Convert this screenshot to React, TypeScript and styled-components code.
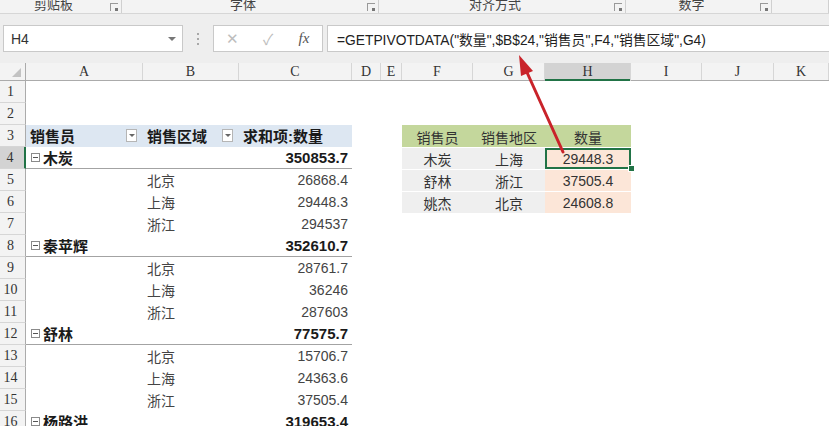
import styled, { createGlobalStyle } from "styled-components"

const GlobalStyle = createGlobalStyle`
  html, body {
    margin: 0;
    padding: 0;
    background: #ffffff;
    overflow: hidden;
  }
  body {
    font-family: "Liberation Sans", "Noto Sans CJK SC", sans-serif;
    color: #333;
  }
`;

const UI = `"Liberation Sans", "Noto Sans CJK SC", sans-serif`;
const HEAD_FONT = `"Liberation Serif", "Noto Sans CJK SC", serif`;
const GRID = "26px 117px 96px 113px 29px 21px 71px 72px 86px 71px 72px 1fr";

const Page = styled.div`
  position: relative;
  width: 829px;
  height: 426px;
  overflow: hidden;
  background: #ffffff;
`;

/* ribbon group captions */
const RibbonBar = styled.div`
  display: flex;
  height: 13px;
  background: #f3f3f3;
  border-bottom: 1px solid #d6d6d6;
  overflow: hidden;
`;

const RibbonGroup = styled.div<{ $w: number }>`
  display: flex;
  align-items: flex-start;
  width: ${(p) => p.$w}px;
  flex: ${(p) => (p.$w ? "none" : "1")};
  border-right: 1px solid #d0d0d0;
  box-sizing: border-box;
`;

const GroupLabel = styled.div`
  flex: 1;
  text-align: center;
  font-family: ${UI};
  font-size: 13px;
  line-height: 13px;
  margin-top: -2px;
  color: #444;
`;

const Launcher = styled.div`
  width: 7px;
  height: 7px;
  margin: 3px 3px 0 3px;
  border-left: 1px solid #999;
  border-top: 1px solid #999;
  position: relative;
  &::after {
    content: "";
    position: absolute;
    right: 0;
    bottom: 0;
    width: 3px;
    height: 3px;
    background: #777;
  }
`;

/* formula bar */
const FormulaBand = styled.div`
  display: flex;
  align-items: center;
  height: 49px;
  padding: 0 0 0 3px;
  background: #eeeeee;
`;

const NameBox = styled.div`
  display: flex;
  align-items: center;
  justify-content: space-between;
  width: 180px;
  height: 27px;
  box-sizing: border-box;
  background: #fff;
  border: 1px solid #c9c9c9;
  padding: 0 6px 0 7px;
  font-family: ${UI};
  font-size: 14px;
  color: #333;
`;

const Caret = styled.span`
  width: 0;
  height: 0;
  border-left: 4px solid transparent;
  border-right: 4px solid transparent;
  border-top: 4px solid #777;
`;

const Grip = styled.div`
  width: 30px;
  display: flex;
  flex-direction: column;
  align-items: center;
  gap: 3px;
  span {
    width: 2px;
    height: 2px;
    background: #a8a8a8;
  }
`;

const FxButtons = styled.div`
  display: flex;
  align-items: center;
  width: 110px;
  height: 27px;
  box-sizing: border-box;
  background: #fff;
  border: 1px solid #c9c9c9;
`;

const FxBtn = styled.span<{ $dim?: boolean }>`
  flex: 1;
  text-align: center;
  font-size: 15px;
  color: ${(p) => (p.$dim ? "#bdbdbd" : "#555")};
  font-family: ${(p) => (p.$dim ? UI : `"Liberation Serif", serif`)};
  font-style: ${(p) => (p.$dim ? "normal" : "italic")};
`;

const FormulaInput = styled.div`
  flex: 1;
  height: 27px;
  margin-left: 4px;
  box-sizing: border-box;
  background: #fff;
  border: 1px solid #c9c9c9;
  border-right: none;
  display: flex;
  align-items: center;
  padding-left: 9px;
  font-family: ${UI};
  font-size: 13.8px;
  color: #222;
  white-space: nowrap;
`;

/* sheet */
const SheetRow = styled.div<{ $h: number }>`
  display: grid;
  grid-template-columns: ${GRID};
  height: ${(p) => p.$h}px;
`;

const ColHeadRow = styled(SheetRow)`
  background: #f3f3f3;
  border-bottom: 1px solid #ababab;
`;

const Corner = styled.div`
  position: relative;
  border-right: 1px solid #ababab;
  &::after {
    content: "";
    position: absolute;
    right: 4px;
    bottom: 3px;
    width: 0;
    height: 0;
    border-left: 9px solid transparent;
    border-bottom: 9px solid #c2c2c2;
  }
`;

const ColHead = styled.div<{ $active?: boolean }>`
  display: flex;
  align-items: center;
  justify-content: center;
  font-family: ${HEAD_FONT};
  font-size: 14px;
  color: #333;
  border-right: 1px solid #d6d6d6;
  box-sizing: border-box;
  background: ${(p) => (p.$active ? "#d3d3d3" : "transparent")};
  box-shadow: ${(p) => (p.$active ? "inset 0 -2px 0 #217346" : "none")};
  margin-bottom: ${(p) => (p.$active ? "-1px" : "0")};
`;

const RowHead = styled.div<{ $active?: boolean }>`
  display: flex;
  align-items: center;
  justify-content: center;
  padding-right: 4px;
  font-family: ${HEAD_FONT};
  font-size: 14px;
  color: #333;
  background: ${(p) => (p.$active ? "#d3d3d3" : "#f3f3f3")};
  border-bottom: 1px solid #d6d6d6;
  border-right: ${(p) => (p.$active ? "2px solid #217346" : "1px solid #ababab")};
  box-sizing: border-box;
`;

type Tone = "none" | "head" | "group" | "item";

const PivotCell = styled.div<{ $tone: Tone; $right?: boolean }>`
  display: flex;
  align-items: center;
  justify-content: ${(p) => (p.$right ? "flex-end" : "space-between")};
  gap: 2px;
  padding: 0 ${(p) => (p.$right ? "4px" : "6px")} 0 4px;
  box-sizing: border-box;
  white-space: nowrap;
  font-family: ${UI};
  font-size: ${(p) => (p.$tone === "item" ? "14px" : "15px")};
  font-weight: ${(p) => (p.$tone === "head" || p.$tone === "group" ? 700 : 400)};
  color: ${(p) => (p.$tone === "item" ? "#444" : "#1a1a1a")};
  background: ${(p) => (p.$tone === "head" ? "#dde7f2" : "transparent")};
  border-bottom: 1px solid ${(p) => (p.$tone === "group" ? "#a3a3a3" : "transparent")};
`;

const FilterBtn = styled.span`
  flex: none;
  width: 11px;
  height: 13px;
  box-sizing: border-box;
  background: #fff;
  border: 1px solid #b5b5b5;
  display: flex;
  align-items: center;
  justify-content: center;
  &::after {
    content: "";
    border-left: 3px solid transparent;
    border-right: 3px solid transparent;
    border-top: 3px solid #666;
  }
`;

const Collapse = styled.span`
  display: inline-flex;
  align-items: center;
  justify-content: center;
  width: 9px;
  height: 9px;
  box-sizing: border-box;
  border: 1px solid #8a8a8a;
  margin: 0 3px 0 1px;
  &::after {
    content: "";
    width: 5px;
    height: 1px;
    background: #555;
  }
`;

const GroupName = styled.span`
  display: flex;
  align-items: center;
`;

const Blank = styled.div``;

type RtTone = "head" | "name" | "val";

const RtCell = styled.div<{ $tone: RtTone; $selected?: boolean }>`
  position: relative;
  display: flex;
  align-items: center;
  justify-content: center;
  font-family: ${UI};
  font-size: 14px;
  color: #333;
  background: ${(p) =>
    p.$tone === "head" ? "#c4d79c" : p.$tone === "val" ? "#fce6d8" : "#efefef"};
  border-top: 1px solid ${(p) => (p.$tone === "head" ? "transparent" : "#ffffff")};
  box-shadow: ${(p) => (p.$selected ? "inset 0 0 0 2px #217346" : "none")};
  &::after {
    content: "";
    display: ${(p) => (p.$selected ? "block" : "none")};
    position: absolute;
    right: -4px;
    bottom: -3px;
    width: 5px;
    height: 5px;
    background: #217346;
    border: 1px solid #fff;
    z-index: 2;
  }
`;

const ArrowLayer = styled.svg`
  position: absolute;
  left: 0;
  top: 0;
  pointer-events: none;
`;

type Pivot =
  | { kind: "head" }
  | { kind: "group"; name: string; total: string }
  | { kind: "item"; city: string; value: string };

type Right =
  | { kind: "head" }
  | { kind: "body"; name: string; city: string; qty: string; selected?: boolean };

const rows: { pivot?: Pivot; right?: Right }[] = [
  {},
  {},
  { pivot: { kind: "head" }, right: { kind: "head" } },
  {
    pivot: { kind: "group", name: "木炭", total: "350853.7" },
    right: { kind: "body", name: "木炭", city: "上海", qty: "29448.3", selected: true },
  },
  {
    pivot: { kind: "item", city: "北京", value: "26868.4" },
    right: { kind: "body", name: "舒林", city: "浙江", qty: "37505.4" },
  },
  {
    pivot: { kind: "item", city: "上海", value: "29448.3" },
    right: { kind: "body", name: "姚杰", city: "北京", qty: "24608.8" },
  },
  { pivot: { kind: "item", city: "浙江", value: "294537" } },
  { pivot: { kind: "group", name: "秦苹辉", total: "352610.7" } },
  { pivot: { kind: "item", city: "北京", value: "28761.7" } },
  { pivot: { kind: "item", city: "上海", value: "36246" } },
  { pivot: { kind: "item", city: "浙江", value: "287603" } },
  { pivot: { kind: "group", name: "舒林", total: "77575.7" } },
  { pivot: { kind: "item", city: "北京", value: "15706.7" } },
  { pivot: { kind: "item", city: "上海", value: "24363.6" } },
  { pivot: { kind: "item", city: "浙江", value: "37505.4" } },
  { pivot: { kind: "group", name: "杨路洪", total: "319653.4" } },
];

const columns = ["A", "B", "C", "D", "E", "F", "G", "H", "I", "J", "K"];

function PivotCells({ pivot }: { pivot?: Pivot }) {
  if (!pivot) {
    return (
      <>
        <Blank />
        <Blank />
        <Blank />
      </>
    );
  }
  if (pivot.kind === "head") {
    return (
      <>
        <PivotCell $tone="head">
          销售员
          <FilterBtn />
        </PivotCell>
        <PivotCell $tone="head">
          销售区域
          <FilterBtn />
        </PivotCell>
        <PivotCell $tone="head">求和项:数量</PivotCell>
      </>
    );
  }
  if (pivot.kind === "group") {
    return (
      <>
        <PivotCell $tone="group">
          <GroupName>
            <Collapse />
            {pivot.name}
          </GroupName>
        </PivotCell>
        <PivotCell $tone="group" />
        <PivotCell $tone="group" $right>
          {pivot.total}
        </PivotCell>
      </>
    );
  }
  return (
    <>
      <PivotCell $tone="item" />
      <PivotCell $tone="item">{pivot.city}</PivotCell>
      <PivotCell $tone="item" $right>
        {pivot.value}
      </PivotCell>
    </>
  );
}

function RightCells({ right }: { right?: Right }) {
  if (!right) {
    return (
      <>
        <Blank />
        <Blank />
        <Blank />
      </>
    );
  }
  if (right.kind === "head") {
    return (
      <>
        <RtCell $tone="head">销售员</RtCell>
        <RtCell $tone="head">销售地区</RtCell>
        <RtCell $tone="head">数量</RtCell>
      </>
    );
  }
  return (
    <>
      <RtCell $tone="name">{right.name}</RtCell>
      <RtCell $tone="name">{right.city}</RtCell>
      <RtCell $tone="val" $selected={right.selected}>
        {right.qty}
      </RtCell>
    </>
  );
}

const ribbonGroups = [
  { label: "剪贴板", w: 122 },
  { label: "字体", w: 257 },
  { label: "对齐方式", w: 247 },
  { label: "数字", w: 146 },
];

export default function App() {
  return (
    <Page>
      <GlobalStyle />
      <RibbonBar>
        {ribbonGroups.map((g) => (
          <RibbonGroup key={g.label} $w={g.w}>
            <GroupLabel>{g.label}</GroupLabel>
            <Launcher />
          </RibbonGroup>
        ))}
        <RibbonGroup $w={0} />
      </RibbonBar>

      <FormulaBand>
        <NameBox>
          H4
          <Caret />
        </NameBox>
        <Grip>
          <span />
          <span />
          <span />
        </Grip>
        <FxButtons>
          <FxBtn $dim>✕</FxBtn>
          <FxBtn $dim>✓</FxBtn>
          <FxBtn>fx</FxBtn>
        </FxButtons>
        <FormulaInput>=GETPIVOTDATA("数量",$B$24,"销售员",F4,"销售区域",G4)</FormulaInput>
      </FormulaBand>

      <ColHeadRow $h={17}>
        <Corner />
        {columns.map((c) => (
          <ColHead key={c} $active={c === "H"}>
            {c}
          </ColHead>
        ))}
      </ColHeadRow>

      {rows.map((r, i) => (
        <SheetRow key={i} $h={22}>
          <RowHead $active={i === 3}>{i + 1}</RowHead>
          <PivotCells pivot={r.pivot} />
          <Blank />
          <Blank />
          <RightCells right={r.right} />
          <Blank />
          <Blank />
          <Blank />
        </SheetRow>
      ))}

      <ArrowLayer width={829} height={426} viewBox="0 0 829 426">
        <line x1={563} y1={152} x2={525} y2={68} stroke="#c9232a" strokeWidth={3} strokeLinecap="round" />
        <polygon points="519,55 533,71 521,76" fill="#c9232a" />
      </ArrowLayer>
    </Page>
  );
}
